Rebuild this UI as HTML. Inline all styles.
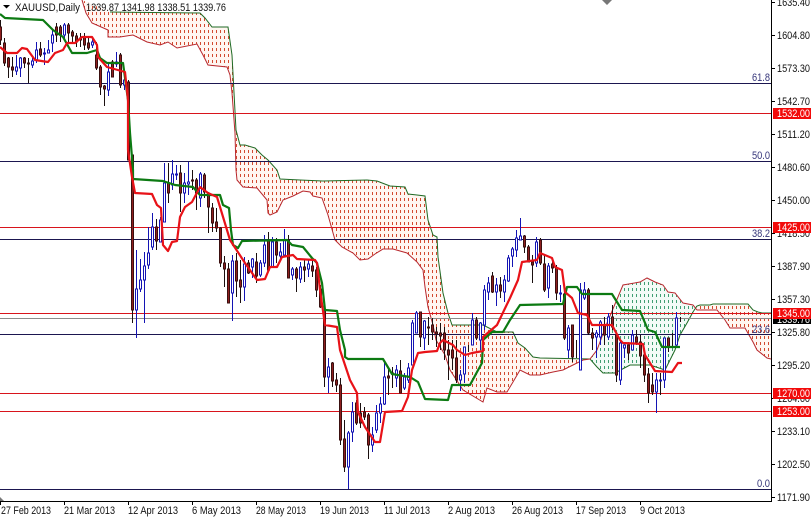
<!DOCTYPE html>
<html><head><meta charset="utf-8"><style>
html,body{margin:0;padding:0;background:#fff;overflow:hidden}
svg{display:block}
text{font-family:"Liberation Sans",sans-serif;font-size:11px;fill:#111}
</style></head><body>
<svg width="811" height="518" viewBox="0 0 811 518" xmlns="http://www.w3.org/2000/svg">
<defs>
<pattern id="o" width="4" height="6" patternUnits="userSpaceOnUse"><rect width="4" height="6" fill="#fff6f1"/><rect width="1" height="3" fill="#d2492f"/></pattern>
<pattern id="g" width="4" height="6" patternUnits="userSpaceOnUse"><rect width="4" height="6" fill="#f3fbf7"/><rect width="1" height="3" fill="#3f9e72"/></pattern>
<clipPath id="c"><rect width="771" height="501"/></clipPath>
</defs>
<rect width="811" height="518" fill="#fff"/>
<g clip-path="url(#c)">
<!-- clouds -->
<path fill="url(#o)" d="M82 0L110 12L200 13L205 18L212 27L228 27L232 55L236 130L240 145L245 145L255 148L262 155L268 160L277 170L280 179L300 180L323 181L367 180L377 181L390 186L405 187L408 194L417 195L425 196L428 220L433 235L437 237L438 257L443 293L448 313L452 325L483 325L497 332L513 332L518 343L525 348L533 357L540 358L590 359L583 360L563 370L553 372L540 375L530 375L520 370L513 382L507 392L497 392L487 388L483 402L463 390L450 370L445 355L436 340L433 325L428 307L425 287L423 270L417 262L407 253L393 249L383 249L375 254L368 259L360 260L353 253L342 247L335 240L328 215L322 198L313 196L310 192L303 191L293 196L283 200L277 212L270 215L268 213L267 200L257 188L243 187L237 180L236 170L235 133L232 93L230 75L227 67L208 65L203 55L197 44L177 48L168 42L160 45L147 42L133 35L120 37L108 37L108 30L92 23L86 13Z"/>
<path fill="url(#g)" d="M590 359L597 350L607 323L623 285L640 282L647 278L655 282L663 285L668 292L675 293L683 303L693 305L697 306L693 312L687 323L680 335L675 350L665 370L650 365L630 365L615 373L603 373L597 367Z"/>
<path fill="url(#o)" d="M697 306L700 305L710 305L713 304L748 304L753 310L758 312L762 313L771 313L771 359L767 358L757 350L753 342L745 328L730 328L725 320L717 310L697 310Z"/>
<g fill="none" stroke-width="1">
<path stroke="#1f6a24" d="M110 12L200 13L205 18L212 27L228 27L232 55L236 130L240 145L245 145L255 148L262 155L268 160L277 170L280 179L300 180L323 181L367 180L377 181L390 186L405 187L408 194L417 195L425 196L428 220L433 235L437 237L438 257L443 293L448 313L452 325L483 325L497 332L513 332L518 343L525 348L533 357L540 358L590 359L597 367L603 373L615 373L630 365L650 365L665 370L675 350L680 335L687 323L693 312L697 306L700 305L710 305L713 304L748 304L753 310L758 312L762 313L771 313"/>
<path stroke="#b8282e" d="M82 0L86 13L92 23L108 30L108 37L120 37L133 35L147 42L160 45L168 42L177 48L197 44L203 55L208 65L227 67L230 75L232 93L235 133L236 170L237 180L243 187L257 188L267 200L268 213L270 215L277 212L283 200L293 196L303 191L310 192L313 196L322 198L328 215L335 240L342 247L353 253L360 260L368 259L375 254L383 249L393 249L407 253L417 262L423 270L425 287L428 307L433 325L436 340L445 355L450 370L463 390L483 402L487 388L497 392L507 392L513 382L520 370L530 375L540 375L553 372L563 370L583 360L590 359L597 350L607 323L623 285L640 282L647 278L655 282L663 285L668 292L675 293L683 303L693 305L697 310L717 310L725 320L730 328L745 328L753 342L757 350L767 358L771 359"/>
</g>
<!-- level lines -->
<path stroke="#1b1650" stroke-width="1" d="M0 83.500H771M0 161.500H771M0 239.500H771M0 334.500H771M0 489.500H771"/>
<path stroke="#8c8c8c" d="M0 318.500H771"/>
<path stroke="#d8141c" stroke-width="1" d="M0 113.500H771M0 227.500H771M0 313.500H771M0 393.500H771M0 411.500H771"/>
<!-- wicks dark -->
<path stroke="#1a0f0f" stroke-width="1" fill="none" d="M0.500 20V45M4.500 38V66M8.500 57V78M12.500 57V77M24.500 57V68M28.500 58V83M40.500 42V57M56.500 23V42M60.500 25V42M68.500 23V42M72.500 30V43M76.500 33V47M80.500 33V47M84.500 33V50M88.500 37V50M96.500 42V70M100.500 65V95M104.500 85V106M112.500 60V77M120.500 53V88M128.500 80V160M132.500 155V323M156.500 219V250M168.500 163V203M180.500 165V212M192.500 170V190M196.500 178V210M204.500 173V198M208.500 192V233M212.500 203V232M216.500 208V232M220.500 227V267M224.500 256V287M228.500 263V303M236.500 253V297M240.500 260V303M248.500 260V274M256.500 253V283M268.500 232V272M276.500 238V263M288.500 235V278M296.500 267V292M304.500 260V282M312.500 260V277M316.500 267V297M320.500 285V308M324.500 305V387M332.500 362V387M336.500 373V392M340.500 378V445M344.500 420V472M356.500 400V425M360.500 403V428M364.500 407V420M368.500 413V459M388.500 367V395M392.500 367V388M400.500 360V393M420.500 312V347M428.500 317V345M432.500 318V340M436.500 327V347M440.500 323V350M444.500 327V360M448.500 340V380M452.500 340V370M456.500 340V383M468.500 345V352M476.500 317V340M492.500 272V293M500.500 277V298M524.500 235V253M528.500 245V262M532.500 255V283M540.500 238V265M544.500 255V292M552.500 258V273M556.500 265V300M564.500 288V340M572.500 325V362M576.500 340V358M588.500 288V335M592.500 328V350M604.500 317V345M612.500 305V330M616.500 335V382M628.500 345V360M636.500 330V345M640.500 335V368M644.500 352V382M648.500 368V403M652.500 373V395M660.500 373V395M668.500 338V352M672.500 333V347M680.500 317V322"/>
<!-- wicks blue -->
<path stroke="#1414b4" stroke-width="1" fill="none" d="M16.500 55V75M20.500 57V77M32.500 58V68M36.500 42V63M44.500 48V65M48.500 40V53M52.500 30V52M64.500 23V40M92.500 37V48M108.500 63V96M116.500 52V67M124.500 72V90M136.500 250V338M140.500 259V292M144.500 252V323M148.500 227V269M152.500 213V250M160.500 217V242M164.500 163V222M172.500 160V190M176.500 165V180M184.500 173V203M188.500 162V195M200.500 172V207M232.500 255V321M244.500 257V301M252.500 258V278M260.500 260V277M264.500 235V267M272.500 237V268M280.500 243V260M284.500 229V257M292.500 267V280M300.500 262V283M308.500 260V277M328.500 358V393M348.500 431V489M352.500 402V442M372.500 427V452M376.500 405V433M380.500 397V423M384.500 362V405M396.500 365V387M404.500 373V390M408.500 363V383M412.500 320V365M416.500 311V333M424.500 320V350M460.500 370V391M464.500 347V383M472.500 313V345M480.500 322V350M484.500 285V330M488.500 277V300M496.500 278V306M504.500 275V302M508.500 255V282M512.500 247V267M516.500 230V257M520.500 218V240M536.500 237V267M548.500 263V298M560.500 285V302M568.500 325V358M580.500 283V370M584.500 282V300M596.500 330V358M600.500 320V345M608.500 313V340M620.500 340V385M624.500 345V358M632.500 330V350M656.500 373V413M664.500 338V388M676.500 312V345"/>
<!-- bodies maroon -->
<path fill="#8e1f1f" stroke="#3a0f0f" stroke-width="1" d="M-.5 27h2v13h-2zM3.500 43h2v20h-2zM7.500 58h2v9h-2zM11.500 67h2v3h-2zM23.500 58h2v5h-2zM27.500 63h2v1h-2zM55.500 27h2v8h-2zM59.500 27h2v8h-2zM67.500 25h2v8h-2zM71.500 32h2v4h-2zM75.500 36h2v6h-2zM79.500 38h2v2h-2zM83.500 37h2v8h-2zM87.500 43h2v5h-2zM39.500 49h2v6h-2zM95.500 55h2v13h-2zM99.500 67h2v20h-2zM103.500 86h2v3h-2zM111.500 62h2v15h-2zM119.500 55h2v30h-2zM127.500 82h2v78h-2zM131.500 155h2v155h-2zM155.500 227h2v14h-2zM167.500 183h2v10h-2zM179.500 173h2v20h-2zM191.500 180h2v1h-2zM195.500 180h2v13h-2zM203.500 175h2v17h-2zM207.500 193h2v14h-2zM211.500 208h2v15h-2zM215.500 222h2v6h-2zM219.500 228h2v35h-2zM223.500 263h2v6h-2zM227.500 269h2v34h-2zM235.500 261h2v20h-2zM239.500 280h2v7h-2zM247.500 263h2v10h-2zM255.500 262h2v14h-2zM267.500 240h2v30h-2zM275.500 242h2v13h-2zM287.500 240h2v38h-2zM295.500 269h2v9h-2zM303.500 267h2v3h-2zM311.500 266h2v5h-2zM315.500 270h2v20h-2zM319.500 289h2v18h-2zM323.500 310h2v67h-2zM331.500 363h2v18h-2zM335.500 380h2v5h-2zM339.500 385h2v55h-2zM343.500 439h2v28h-2zM355.500 403h2v20h-2zM359.500 413h2v10h-2zM363.500 412h2v5h-2zM367.500 415h2v30h-2zM387.500 376h2v2h-2zM391.500 373h2v1h-2zM399.500 371h2v22h-2zM419.500 312h2v25h-2zM427.500 327h2v1h-2zM431.500 325h2v7h-2zM435.500 332h2v2h-2zM439.500 333h2v3h-2zM443.500 333h2v17h-2zM447.500 350h2v5h-2zM451.500 350h2v8h-2zM455.500 358h2v22h-2zM475.500 320h2v18h-2zM491.500 276h2v16h-2zM499.500 285h2v6h-2zM523.500 236h2v11h-2zM527.500 247h2v15h-2zM531.500 262h2v3h-2zM539.500 240h2v23h-2zM543.500 264h2v26h-2zM551.500 264h2v4h-2zM555.500 268h2v25h-2zM563.500 294h2v44h-2zM571.500 325h2v32h-2zM587.500 290h2v43h-2zM591.500 333h2v5h-2zM603.500 325h2v10h-2zM611.500 317h2v10h-2zM615.500 335h2v40h-2zM627.500 345h2v8h-2zM635.500 337h2v5h-2zM639.500 342h2v14h-2zM643.500 355h2v20h-2zM647.500 374h2v19h-2zM651.500 385h2v7h-2zM667.500 338h2v9h-2z"/>
<!-- bodies blue -->
<path fill="#fff" stroke="#1414b4" stroke-width="1" d="M15.500 67h2v4h-2zM19.500 58h2v10h-2zM31.500 61h2v4h-2zM35.500 50h2v10h-2zM43.500 53h2v1h-2zM47.500 50h2v3h-2zM51.500 35h2v8h-2zM63.500 25h2v10h-2zM91.500 42h2v3h-2zM107.500 72h2v18h-2zM115.500 62h2v2h-2zM123.500 80h2v5h-2zM135.500 289h2v21h-2zM139.500 280h2v9h-2zM143.500 266h2v14h-2zM147.500 253h2v12h-2zM151.500 227h2v20h-2zM159.500 220h2v22h-2zM163.500 183h2v39h-2zM171.500 174h2v11h-2zM175.500 174h2v1h-2zM183.500 183h2v10h-2zM187.500 182h2v2h-2zM199.500 174h2v24h-2zM231.500 261h2v32h-2zM243.500 264h2v23h-2zM251.500 259h2v8h-2zM259.500 263h2v12h-2zM263.500 245h2v18h-2zM271.500 242h2v25h-2zM279.500 252h2v4h-2zM283.500 240h2v15h-2zM291.500 269h2v6h-2zM299.500 267h2v12h-2zM307.500 264h2v5h-2zM327.500 367h2v10h-2zM347.500 433h2v34h-2zM351.500 412h2v20h-2zM371.500 435h2v10h-2zM375.500 413h2v17h-2zM379.500 404h2v9h-2zM383.500 377h2v27h-2zM395.500 370h2v8h-2zM403.500 377h2v11h-2zM407.500 368h2v12h-2zM411.500 323h2v42h-2zM415.500 313h2v20h-2zM423.500 321h2v17h-2zM459.500 375h2v5h-2zM463.500 347h2v27h-2zM471.500 320h2v25h-2zM479.500 323h2v17h-2zM483.500 290h2v35h-2zM487.500 283h2v9h-2zM495.500 285h2v7h-2zM503.500 280h2v12h-2zM507.500 258h2v23h-2zM511.500 249h2v7h-2zM515.500 238h2v12h-2zM519.500 236h2v4h-2zM535.500 242h2v21h-2zM547.500 266h2v22h-2zM559.500 293h2v1h-2zM567.500 328h2v22h-2zM579.500 290h2v80h-2zM583.500 290h2v8h-2zM595.500 333h2v4h-2zM599.500 322h2v15h-2zM607.500 317h2v20h-2zM619.500 343h2v37h-2zM623.500 345h2v3h-2zM631.500 335h2v15h-2zM655.500 380h2v12h-2zM659.500 380h2v1h-2zM663.500 338h2v42h-2zM675.500 318h2v27h-2z"/>
<!-- ichimoku lines -->
<polyline fill="none" stroke="#0c7a12" stroke-width="2.2" stroke-linejoin="round" points="0,14 5,18 43,20 53,30 63,37 72,53 87,53 97,50 100,58 107,63 123,63 128,100 130,133 133,170 133,179 163,181 175,185 193,187 200,195 220,195 223,205 229,208 231,230 233,245 238,248 242,241 287,240 292,245 303,247 312,258 317,263 322,283 325,310 337,311 340,330 345,350 345,357 348,359 383,359 392,374 410,377 418,382 425,399 448,400 452,385 470,385 477,372 482,363 483,340 492,332 503,332 510,320 520,305 563,304 567,287 577,287 582,294 612,294 622,310 640,311 648,330 655,332 662,347 680,347"/>
<polyline fill="none" stroke="#e81218" stroke-width="2.2" stroke-linejoin="round" points="0,47 7,53 17,53 22,48 27,49 35,60 48,62 55,53 63,50 67,43 75,43 82,37 92,37 97,45 98,57 107,67 125,72 128,100 128,150 132,177 135,193 152,194 157,205 161,208 163,245 168,251 172,242 177,241 180,217 185,207 192,202 200,187 208,193 217,197 230,240 245,263 257,280 265,279 270,267 277,267 282,257 293,255 297,259 315,260 317,263 320,290 325,325 337,327 340,350 350,380 357,393 358,412 365,427 375,442 380,442 385,412 402,411 408,397 412,370 418,353 425,352 437,351 440,343 443,340 453,345 457,350 465,355 472,353 483,351 483,337 497,325 510,298 518,280 522,262 537,260 540,253 552,258 555,267 562,270 565,292 572,298 578,313 587,315 592,325 612,325 620,340 623,343 643,344 645,355 655,371 672,372 678,363 682,363"/>
<!-- markers -->
<path fill="#777" d="M607 -5l5 5-5 5-5-5zM0 497l4 4H0z"/>
<path d="M3 5h7l-3.500 3.500z" fill="#000"/>
</g>
<!-- fib labels -->
<text x="752" y="81" textLength="18" lengthAdjust="spacingAndGlyphs" style="fill:#35357a">61.8</text>
<text x="752" y="159" textLength="18" lengthAdjust="spacingAndGlyphs" style="fill:#35357a">50.0</text>
<text x="752" y="237" textLength="18" lengthAdjust="spacingAndGlyphs" style="fill:#35357a">38.2</text>
<text x="752" y="333" textLength="18" lengthAdjust="spacingAndGlyphs" style="fill:#35357a">23.6</text>
<text x="757" y="487" textLength="13" lengthAdjust="spacingAndGlyphs" style="fill:#35357a">0.0</text>
<!-- header -->
<text x="15" y="11" textLength="65" lengthAdjust="spacingAndGlyphs">XAUUSD,Daily</text>
<text x="86" y="11" textLength="140" lengthAdjust="spacingAndGlyphs">1339.87 1341.98 1338.51 1339.76</text>
<!-- axes -->
<path stroke="#000" fill="none" d="M771.500 0V501.500H0"/>
<path stroke="#000" fill="none" d="M771 2.500h4M771 35.500h4M771 68.500h4M771 101.500h4M771 134.500h4M771 167.500h4M771 200.500h4M771 233.500h4M771 266.500h4M771 299.500h4M771 332.500h4M771 365.500h4M771 398.500h4M771 431.500h4M771 464.500h4M771 497.500h4M0.500 501v4M64.500 501v4M128.500 501v4M192.500 501v4M256.500 501v4M320.500 501v4M384.500 501v4M448.500 501v4M512.500 501v4M576.500 501v4M640.500 501v4"/>
<text x="777" y="6" textLength="33" lengthAdjust="spacingAndGlyphs">1635.40</text>
<text x="777" y="39" textLength="33" lengthAdjust="spacingAndGlyphs">1604.80</text>
<text x="777" y="72" textLength="33" lengthAdjust="spacingAndGlyphs">1573.30</text>
<text x="777" y="105" textLength="33" lengthAdjust="spacingAndGlyphs">1542.70</text>
<text x="777" y="138" textLength="33" lengthAdjust="spacingAndGlyphs">1511.20</text>
<text x="777" y="171" textLength="33" lengthAdjust="spacingAndGlyphs">1480.60</text>
<text x="777" y="204" textLength="33" lengthAdjust="spacingAndGlyphs">1450.00</text>
<text x="777" y="237" textLength="33" lengthAdjust="spacingAndGlyphs">1418.50</text>
<text x="777" y="270" textLength="33" lengthAdjust="spacingAndGlyphs">1387.90</text>
<text x="777" y="303" textLength="33" lengthAdjust="spacingAndGlyphs">1357.30</text>
<text x="777" y="336" textLength="33" lengthAdjust="spacingAndGlyphs">1325.80</text>
<text x="777" y="369" textLength="33" lengthAdjust="spacingAndGlyphs">1295.20</text>
<text x="777" y="402" textLength="33" lengthAdjust="spacingAndGlyphs">1264.60</text>
<text x="777" y="435" textLength="33" lengthAdjust="spacingAndGlyphs">1233.10</text>
<text x="777" y="468" textLength="33" lengthAdjust="spacingAndGlyphs">1202.50</text>
<text x="777" y="501" textLength="33" lengthAdjust="spacingAndGlyphs">1171.90</text>
<rect x="773" y="313" width="38" height="11" fill="#000"/>
<text x="777" y="323" textLength="33" lengthAdjust="spacingAndGlyphs" style="fill:#fff">1339.76</text>
<rect x="773" y="108" width="38" height="11" fill="#f20a0a"/>
<text x="777" y="117" textLength="33" lengthAdjust="spacingAndGlyphs" style="fill:#fff">1532.00</text>
<rect x="773" y="222" width="38" height="11" fill="#f20a0a"/>
<text x="777" y="231" textLength="33" lengthAdjust="spacingAndGlyphs" style="fill:#fff">1425.00</text>
<rect x="773" y="308" width="38" height="11" fill="#f20a0a"/>
<text x="777" y="317" textLength="33" lengthAdjust="spacingAndGlyphs" style="fill:#fff">1345.00</text>
<rect x="773" y="388" width="38" height="11" fill="#f20a0a"/>
<text x="777" y="397" textLength="33" lengthAdjust="spacingAndGlyphs" style="fill:#fff">1270.00</text>
<rect x="773" y="406" width="38" height="11" fill="#f20a0a"/>
<text x="777" y="415" textLength="33" lengthAdjust="spacingAndGlyphs" style="fill:#fff">1253.00</text>
<!-- dates -->
<text x="1" y="514" textLength="50" lengthAdjust="spacingAndGlyphs">27 Feb 2013</text>
<text x="64" y="514" textLength="51" lengthAdjust="spacingAndGlyphs">21 Mar 2013</text>
<text x="128" y="514" textLength="50" lengthAdjust="spacingAndGlyphs">12 Apr 2013</text>
<text x="192" y="514" textLength="49" lengthAdjust="spacingAndGlyphs">6 May 2013</text>
<text x="256" y="514" textLength="50" lengthAdjust="spacingAndGlyphs">28 May 2013</text>
<text x="320" y="514" textLength="49" lengthAdjust="spacingAndGlyphs">19 Jun 2013</text>
<text x="384" y="514" textLength="46" lengthAdjust="spacingAndGlyphs">11 Jul 2013</text>
<text x="448" y="514" textLength="47" lengthAdjust="spacingAndGlyphs">2 Aug 2013</text>
<text x="512" y="514" textLength="51" lengthAdjust="spacingAndGlyphs">26 Aug 2013</text>
<text x="576" y="514" textLength="50" lengthAdjust="spacingAndGlyphs">17 Sep 2013</text>
<text x="640" y="514" textLength="45" lengthAdjust="spacingAndGlyphs">9 Oct 2013</text>
</svg>
</body></html>
